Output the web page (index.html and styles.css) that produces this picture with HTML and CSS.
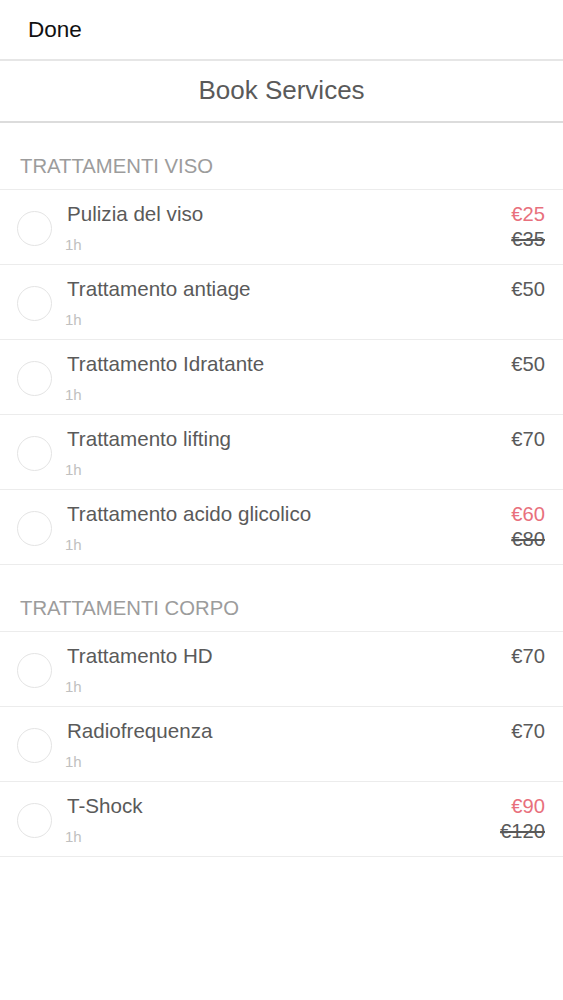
FILE: index.html
```html
<!DOCTYPE html>
<html>
<head>
<meta charset="utf-8">
<link rel="stylesheet" href="styles.css">
</head>
<body>
<div class="topbar"><span class="done">Done</span></div>
<div class="titlebar"><span class="title">Book Services</span></div>
<div class="list">
  <div class="section">TRATTAMENTI VISO</div>
  <div class="row">
    <div class="circle"></div>
    <div class="info"><div class="name">Pulizia del viso</div><div class="dur">1h</div></div>
    <div class="price"><div class="sale">€25</div><div class="old">€35</div></div>
  </div>
  <div class="row">
    <div class="circle"></div>
    <div class="info"><div class="name">Trattamento antiage</div><div class="dur">1h</div></div>
    <div class="price"><div class="reg">€50</div></div>
  </div>
  <div class="row">
    <div class="circle"></div>
    <div class="info"><div class="name">Trattamento Idratante</div><div class="dur">1h</div></div>
    <div class="price"><div class="reg">€50</div></div>
  </div>
  <div class="row">
    <div class="circle"></div>
    <div class="info"><div class="name">Trattamento lifting</div><div class="dur">1h</div></div>
    <div class="price"><div class="reg">€70</div></div>
  </div>
  <div class="row">
    <div class="circle"></div>
    <div class="info"><div class="name">Trattamento acido glicolico</div><div class="dur">1h</div></div>
    <div class="price"><div class="sale">€60</div><div class="old">€80</div></div>
  </div>
  <div class="section">TRATTAMENTI CORPO</div>
  <div class="row">
    <div class="circle"></div>
    <div class="info"><div class="name">Trattamento HD</div><div class="dur">1h</div></div>
    <div class="price"><div class="reg">€70</div></div>
  </div>
  <div class="row">
    <div class="circle"></div>
    <div class="info"><div class="name">Radiofrequenza</div><div class="dur">1h</div></div>
    <div class="price"><div class="reg">€70</div></div>
  </div>
  <div class="row">
    <div class="circle"></div>
    <div class="info"><div class="name">T-Shock</div><div class="dur">1h</div></div>
    <div class="price"><div class="sale">€90</div><div class="old">€120</div></div>
  </div>
</div>
</body>
</html>
```
FILE: styles.css
```css
html, body {
  margin: 0;
  padding: 0;
  background: #fff;
  font-family: "Liberation Sans", Arial, sans-serif;
}
.topbar {
  height: 61px;
  box-sizing: border-box;
  display: flex;
  align-items: center;
  padding-left: 28px;
  border-bottom: 2px solid #e6e6e6;
}
.done {
  font-size: 22.5px;
  color: #111;
}
.titlebar {
  height: 62px;
  box-sizing: border-box;
  display: flex;
  align-items: center;
  justify-content: center;
  padding-bottom: 2px;
  border-bottom: 2px solid #dcdcdc;
}
.title {
  font-size: 26px;
  color: #5a5a5a;
}
.section {
  height: 67px;
  box-sizing: border-box;
  padding-left: 20px;
  padding-bottom: 11px;
  display: flex;
  align-items: flex-end;
  font-size: 20.3px;
  color: #9c9c9c;
  border-bottom: 1px solid #ececec;
}
.row {
  height: 75px;
  box-sizing: border-box;
  display: flex;
  align-items: flex-start;
  border-bottom: 1px solid #ececec;
}
.circle {
  width: 33px;
  height: 33px;
  border: 1.5px solid #e4e4e4;
  border-radius: 50%;
  margin: 21px 0 0 17px;
  flex: none;
}
.info {
  flex: 1;
  padding-left: 15px;
  padding-top: 12px;
}
.name {
  font-size: 20.6px;
  color: #5a5a5a;
  line-height: 24px;
}
.dur {
  font-size: 15px;
  color: #c0c0c0;
  margin-top: 10px;
  margin-left: -2px;
}
.price {
  padding-right: 18px;
  padding-top: 12px;
  text-align: right;
  font-size: 20.2px;
  line-height: 24px;
}
.reg { color: #5a5a5a; }
.sale { color: #e8707c; }
.old {
  color: #5a5a5a;
  text-decoration: line-through;
  margin-top: 1px;
}
```
